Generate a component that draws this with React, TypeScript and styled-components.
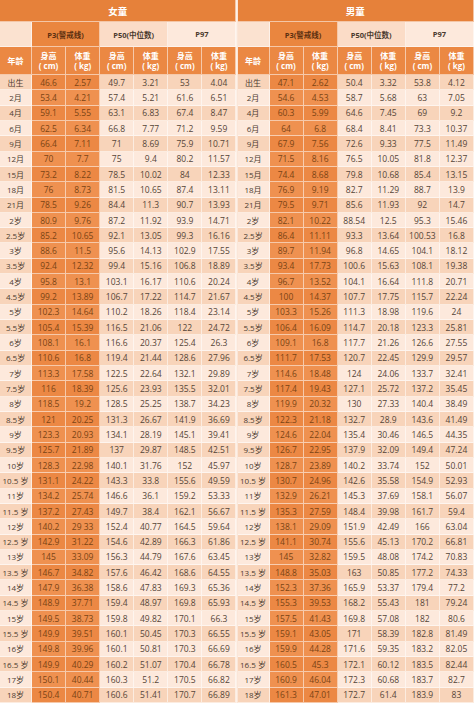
import * as React from 'react';
import styled, { createGlobalStyle } from 'styled-components';

type Row = [string, number | string, number | string, number | string, number | string, number | string, number | string];

const girls: Row[] = [
    ['出生', 46.6, 2.57, 49.7, 3.21, 53, 4.04],
    ['2月', 53.4, 4.21, 57.4, 5.21, 61.6, 6.51],
    ['4月', 59.1, 5.55, 63.1, 6.83, 67.4, 8.47],
    ['6月', 62.5, 6.34, 66.8, 7.77, 71.2, 9.59],
    ['9月', 66.4, 7.11, 71, 8.69, 75.9, 10.71],
    ['12月', 70, 7.7, 75, 9.4, 80.2, 11.57],
    ['15月', 73.2, 8.22, 78.5, 10.02, 84, 12.33],
    ['18月', 76, 8.73, 81.5, 10.65, 87.4, 13.11],
    ['21月', 78.5, 9.26, 84.4, 11.3, 90.7, 13.93],
    ['2岁', 80.9, 9.76, 87.2, 11.92, 93.9, 14.71],
    ['2.5岁', 85.2, 10.65, 92.1, 13.05, 99.3, 16.16],
    ['3岁', 88.6, 11.5, 95.6, 14.13, 102.9, 17.55],
    ['3.5岁', 92.4, 12.32, 99.4, 15.16, 106.8, 18.89],
    ['4岁', 95.8, 13.1, 103.1, 16.17, 110.6, 20.24],
    ['4.5岁', 99.2, 13.89, 106.7, 17.22, 114.7, 21.67],
    ['5岁', 102.3, 14.64, 110.2, 18.26, 118.4, 23.14],
    ['5.5岁', 105.4, 15.39, 116.5, 21.06, 122, 24.72],
    ['6岁', 108.1, 16.1, 116.6, 20.37, 125.4, 26.3],
    ['6.5岁', 110.6, 16.8, 119.4, 21.44, 128.6, 27.96],
    ['7岁', 113.3, 17.58, 122.5, 22.64, 132.1, 29.89],
    ['7.5岁', 116, 18.39, 125.6, 23.93, 135.5, 32.01],
    ['8岁', 118.5, 19.2, 128.5, 25.25, 138.7, 34.23],
    ['8.5岁', 121, 20.25, 131.3, 26.67, 141.9, 36.69],
    ['9岁', 123.3, 20.93, 134.1, 28.19, 145.1, 39.41],
    ['9.5岁', 125.7, 21.89, 137, 29.87, 148.5, 42.51],
    ['10岁', 128.3, 22.98, 140.1, 31.76, 152, 45.97],
    ['10.5 岁', 131.1, 24.22, 143.3, 33.8, 155.6, 49.59],
    ['11岁', 134.2, 25.74, 146.6, 36.1, 159.2, 53.33],
    ['11.5 岁', 137.2, 27.43, 149.7, 38.4, 162.1, 56.67],
    ['12岁', 140.2, '29 33', 152.4, 40.77, 164.5, 59.64],
    ['12.5 岁', 142.9, 31.22, 154.6, 42.89, 166.3, 61.86],
    ['13岁', 145, 33.09, 156.3, 44.79, 167.6, 63.45],
    ['13.5 岁', 146.7, 34.82, 157.6, 46.42, 168.6, 64.55],
    ['14岁', 147.9, 36.38, 158.6, 47.83, 169.3, 65.36],
    ['14.5 岁', 148.9, 37.71, 159.4, 48.97, 169.8, 65.93],
    ['15岁', 149.5, 38.73, 159.8, 49.82, 170.1, 66.3],
    ['15.5 岁', 149.9, 39.51, 160.1, 50.45, 170.3, 66.55],
    ['16岁', 149.8, 39.96, 160.1, 50.81, 170.3, 66.69],
    ['16.5 岁', 149.9, 40.29, 160.2, 51.07, 170.4, 66.78],
    ['17岁', 150.1, 40.44, 160.3, 51.2, 170.5, 66.82],
    ['18岁', 150.4, 40.71, 160.6, 51.41, 170.7, 66.89],
];

const boys: Row[] = [
    ['出生', 47.1, 2.62, 50.4, 3.32, 53.8, 4.12],
    ['2月', 54.6, 4.53, 58.7, 5.68, 63, 7.05],
    ['4月', 60.3, 5.99, 64.6, 7.45, 69, 9.2],
    ['6月', 64, 6.8, 68.4, 8.41, 73.3, 10.37],
    ['9月', 67.9, 7.56, 72.6, 9.33, 77.5, 11.49],
    ['12月', 71.5, 8.16, 76.5, 10.05, 81.8, 12.37],
    ['15月', 74.4, 8.68, 79.8, 10.68, 85.4, 13.15],
    ['18月', 76.9, 9.19, 82.7, 11.29, 88.7, 13.9],
    ['21月', 79.5, 9.71, 85.6, 11.93, 92, 14.7],
    ['2岁', 82.1, 10.22, 88.54, 12.5, 95.3, 15.46],
    ['2.5岁', 86.4, 11.11, 93.3, 13.64, 100.53, 16.8],
    ['3岁', 89.7, 11.94, 96.8, 14.65, 104.1, 18.12],
    ['3.5岁', 93.4, 17.73, 100.6, 15.63, 108.1, 19.38],
    ['4岁', 96.7, 13.52, 104.1, 16.64, 111.8, 20.71],
    ['4.5岁', 100, 14.37, 107.7, 17.75, 115.7, 22.24],
    ['5岁', 103.3, 15.26, 111.3, 18.98, 119.6, 24],
    ['5.5岁', 106.4, 16.09, 114.7, 20.18, 123.3, 25.81],
    ['6岁', 109.1, 16.8, 117.7, 21.26, 126.6, 27.55],
    ['6.5岁', 111.7, 17.53, 120.7, 22.45, 129.9, 29.57],
    ['7岁', 114.6, 18.48, 124, 24.06, 133.7, 32.41],
    ['7.5岁', 117.4, 19.43, 127.1, 25.72, 137.2, 35.45],
    ['8岁', 119.9, 20.32, 130, 27.33, 140.4, 38.49],
    ['8.5岁', 122.3, 21.18, 132.7, 28.9, 143.6, 41.49],
    ['9岁', 124.6, 22.04, 135.4, 30.46, 146.5, 44.35],
    ['9.5岁', 126.7, 22.95, 137.9, 32.09, 149.4, 47.24],
    ['10岁', 128.7, 23.89, 140.2, 33.74, 152, 50.01],
    ['10.5 岁', 130.7, 24.96, 142.6, 35.58, 154.9, 52.93],
    ['11岁', 132.9, 26.21, 145.3, 37.69, 158.1, 56.07],
    ['11.5 岁', 135.3, 27.59, 148.4, 39.98, 161.7, 59.4],
    ['12岁', 138.1, 29.09, 151.9, 42.49, 166, 63.04],
    ['12.5 岁', 141.1, 30.74, 155.6, 45.13, 170.2, 66.81],
    ['13岁', 145, 32.82, 159.5, 48.08, 174.2, 70.83],
    ['13.5 岁', 148.8, 35.03, 163, 50.85, 177.2, 74.33],
    ['14岁', 152.3, 37.36, 165.9, 53.37, 179.4, 77.2],
    ['14.5 岁', 155.3, 39.53, 168.2, 55.43, 181, 79.24],
    ['15岁', 157.5, 41.43, 169.8, 57.08, 182, 80.6],
    ['15.5 岁', 159.1, 43.05, 171, 58.39, 182.8, 81.49],
    ['16岁', 159.9, 44.28, 171.6, 59.35, 183.2, 82.05],
    ['16.5 岁', 160.5, 45.3, 172.1, 60.12, 183.5, 82.44],
    ['17岁', 160.9, 46.04, 172.3, 60.68, 183.7, 82.7],
    ['18岁', 161.3, 47.01, 172.7, 61.4, 183.9, 83],
];

const GlobalStyle = createGlobalStyle`
    html, body {
        margin: 0;
        padding: 0;
        background: #fdf1e8;
    }
    body {
        font-family: "Open Sans", "Noto Sans CJK SC", sans-serif;
    }
`

type SheetProps = {
    title: string
    rows: Row[]
};

const Sheet = ({title, rows}: SheetProps) => {
    return (
        <Grid>
            <Title>{title}</Title>
            <GroupCell $tone="blank"/>
            <GroupCell $tone="accent">P3(警戒线)</GroupCell>
            <GroupCell $tone="mid">P50(中位数)</GroupCell>
            <GroupCell $tone="light">P97</GroupCell>
            <SubHead>年龄</SubHead>
            {[0, 1, 2].map(i => (
                <React.Fragment key={i}>
                    <SubHead><span>身高</span><span>( cm)</span></SubHead>
                    <SubHead><span>体重</span><span>( kg)</span></SubHead>
                </React.Fragment>
            ))}
            {rows.map((row, r) => (
                <React.Fragment key={row[0]}>
                    <AgeCell $odd={r % 2 === 1}>{row[0]}</AgeCell>
                    {row.slice(1).map((v, c) => (
                        <ValueCell key={c} $odd={r % 2 === 1} $accent={c < 2}>{v}</ValueCell>
                    ))}
                </React.Fragment>
            ))}
        </Grid>
    );
};

export default function App() {
    return (
        <>
            <GlobalStyle/>
            <Page>
                <Sheet title="女童" rows={girls}/>
                <Sheet title="男童" rows={boys}/>
            </Page>
        </>
    );
}

const Page = styled.div`
    display: flex;
    width: 474px;
    height: 703px;
    overflow: hidden;
`

const Grid = styled.div`
    flex: 1;
    display: grid;
    grid-template-columns: 32px repeat(6, 1fr);
    grid-template-rows: 22px 25px 28px repeat(41, 1fr);
    height: 703px;
    border-right: 1px solid #fbe6d8;

    &:last-child {
        border-right: none;
    }
`

const Cell = styled.div`
    display: flex;
    align-items: center;
    justify-content: center;
    text-align: center;
    box-sizing: border-box;
    border-right: 1px solid rgba(255, 255, 255, 0.55);
    border-bottom: 1px solid rgba(255, 255, 255, 0.55);
    white-space: nowrap;
    overflow: hidden;
`

const Title = styled(Cell)`
    grid-column: 1 / -1;
    background: #e6813a;
    color: #fff;
    font-size: 9.5px;
    font-weight: 700;
`

const tones = {
    blank: '#fbe2d0',
    accent: '#ea863f',
    mid: '#fbdcc7',
    light: '#fde9dc',
};

const GroupCell = styled(Cell)<{ $tone: keyof typeof tones }>`
    grid-column: ${props => props.$tone === 'blank' ? 'span 1' : 'span 2'};
    background: ${props => tones[props.$tone]};
    color: ${props => props.$tone === 'accent' ? '#5a2f10' : '#4a3a2e'};
    font-size: 7.5px;
    font-weight: 700;
`

const SubHead = styled(Cell)`
    flex-direction: column;
    gap: 1px;
    background: #eb8843;
    color: #fff;
    font-size: 8px;
    font-weight: 700;
    line-height: 1.15;
`

const AgeCell = styled(Cell)<{ $odd: boolean }>`
    background: ${props => props.$odd ? '#fde9dc' : '#f8d4ba'};
    color: #4c3c30;
    font-size: 8px;
`

const ValueCell = styled(Cell)<{ $odd: boolean, $accent: boolean }>`
    background: ${props => props.$accent
        ? (props.$odd ? '#ef9150' : '#ec8844')
        : (props.$odd ? '#fde9dc' : '#f8d4ba')};
    color: ${props => props.$accent ? '#7a4414' : '#554538'};
    font-size: 8.5px;
`
